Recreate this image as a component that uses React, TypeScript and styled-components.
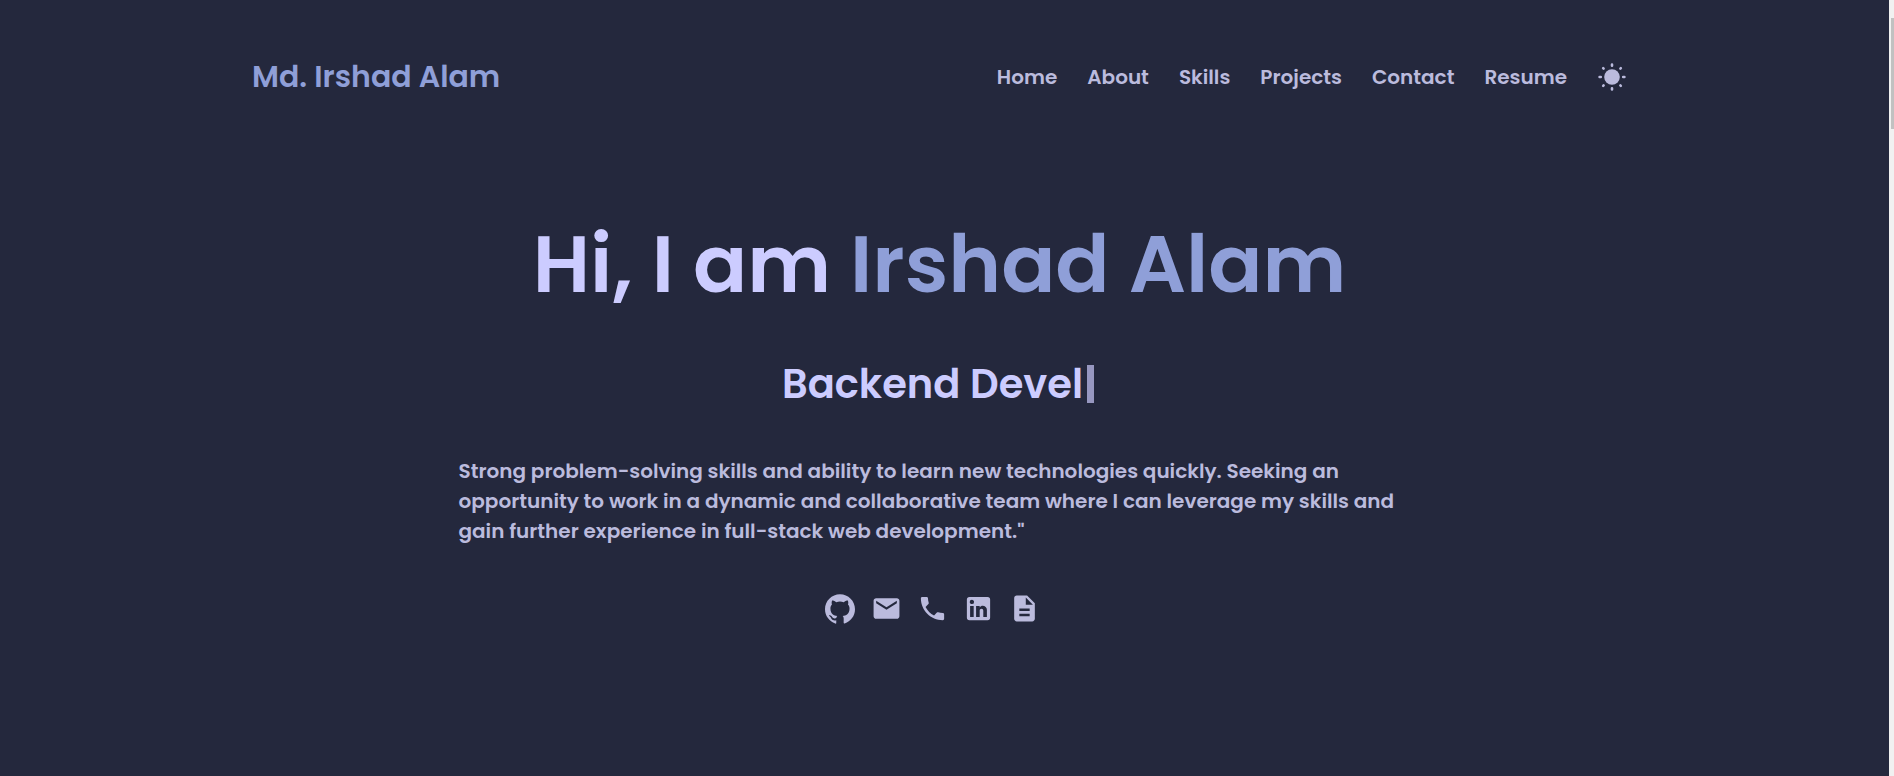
import React from "react";
import styled, { createGlobalStyle } from "styled-components";
import { MdEmail, MdPhone, MdDescription } from "react-icons/md";
import { SiGithub } from "react-icons/si";

const GlobalStyle = createGlobalStyle`
  * { box-sizing: border-box; margin: 0; padding: 0; }
  body { background: #24283d; color: #bbbbdd; font-family: Poppins, Inter, sans-serif; font-weight: 600; }
`;

const Page = styled.div`
  display: grid;
  grid-template-columns: 1fr 5px;
  min-height: 100vh;
`;

const Content = styled.div`
  padding: 0 262px 0 252px;
`;

const ScrollTrack = styled.div`
  background: #f1f1f1;
  padding: 18px 0 0 2px;
`;

const ScrollThumb = styled.div`
  height: 111px;
  background: #c1c1c1;
`;

const Header = styled.header`
  display: flex;
  align-items: center;
  justify-content: space-between;
  padding-top: 53px;
`;

const Brand = styled.a`
  color: #8f9fd8;
  font-size: 30px;
  line-height: 48px;
  text-decoration: none;
`;

const Nav = styled.nav`
  display: flex;
  align-items: center;
  gap: 30px;
`;

const NavLink = styled.a`
  color: inherit;
  font-size: 20px;
  line-height: 30px;
  text-decoration: none;
`;

const ThemeButton = styled.button`
  display: flex;
  border: 0;
  background: none;
  color: inherit;
`;

const Hero = styled.main`
  display: flex;
  flex-direction: column;
  align-items: center;
  padding: 103px 0 80px;
`;

const Title = styled.h1`
  color: #ccccff;
  font-size: 80px;
  line-height: 120px;
  font-weight: 600;
`;

const Accent = styled.span`
  color: #8f9fd8;
`;

const Role = styled.h2`
  display: flex;
  align-items: center;
  gap: 4px;
  margin-top: 30px;
  padding-right: 3px;
  color: #ccccff;
  font-size: 40px;
  line-height: 60px;
  font-weight: 600;
`;

const Cursor = styled.span`
  width: 7px;
  height: 38px;
  background: #9797c0;
`;

const Summary = styled.p`
  width: 100%;
  max-width: 962px;
  margin-top: 42px;
  font-size: 20px;
  line-height: 30px;
`;

const Socials = styled.div`
  display: flex;
  margin-top: 47px;
`;

const SocialLink = styled.a`
  display: flex;
  align-items: center;
  justify-content: center;
  width: 31px;
  height: 31px;
  margin-right: 15px;
  color: inherit;
`;

const navItems = ["Home", "About", "Skills", "Projects", "Contact", "Resume"];

const Sun = () => (
  <svg width="30" height="30" viewBox="0 0 30 30" fill="currentColor" aria-hidden="true">
    <circle cx="15" cy="15" r="7.8" />
    <g stroke="currentColor" strokeWidth="2.6" strokeLinecap="round">
      <path d="M15 2.6v1.2M15 26.2v1.2M2.6 15h1.2M26.2 15h1.2M6.2 6.2l.4.4M23.4 23.4l.4.4M6.2 23.8l.4-.4M23.4 6.6l.4-.4" />
    </g>
  </svg>
);

const LinkedIn = () => (
  <svg width="31" height="31" viewBox="0 0 24 24" fill="currentColor" aria-hidden="true">
    <path d="M19 3a2 2 0 0 1 2 2v14a2 2 0 0 1-2 2H5a2 2 0 0 1-2-2V5a2 2 0 0 1 2-2h14m-.5 15.500v-5.300a3.260 3.260 0 0 0-3.260-3.260c-.85 0-1.840.520-2.320 1.300v-1.110h-2.790v8.370h2.790v-4.930c0-.77.620-1.400 1.390-1.400a1.400 1.400 0 0 1 1.400 1.400v4.930h2.790M6.880 8.560a1.680 1.680 0 0 0 1.680-1.680c0-.93-.75-1.690-1.680-1.690a1.690 1.690 0 0 0-1.690 1.690c0 .93.760 1.680 1.690 1.680m1.390 9.940v-8.370H5.500v8.370h2.770z" />
  </svg>
);

const socials = [
  { label: "GitHub", icon: <SiGithub size={30} /> },
  { label: "Email", icon: <MdEmail size={31} /> },
  { label: "Phone", icon: <MdPhone size={31} /> },
  { label: "LinkedIn", icon: <LinkedIn /> },
  { label: "Resume", icon: <MdDescription size={31} /> },
];

export default function App() {
  return (
    <>
      <GlobalStyle />
      <Page>
        <Content>
          <Header>
            <Brand href="#home">Md. Irshad Alam</Brand>
            <Nav>
              {navItems.map((item) => (
                <NavLink key={item} href={`#${item.toLowerCase()}`}>{item}</NavLink>
              ))}
              <ThemeButton type="button" aria-label="Toggle theme"><Sun /></ThemeButton>
            </Nav>
          </Header>
          <Hero>
            <Title>Hi, I am <Accent>Irshad Alam</Accent></Title>
            <Role>Backend Devel<Cursor /></Role>
            <Summary>
              Strong problem-solving skills and ability to learn new technologies quickly. Seeking an
              opportunity to work in a dynamic and collaborative team where I can leverage my skills and
              gain further experience in full-stack web development."
            </Summary>
            <Socials>
              {socials.map(({ label, icon }) => (
                <SocialLink key={label} href={`#${label.toLowerCase()}`} aria-label={label}>{icon}</SocialLink>
              ))}
            </Socials>
          </Hero>
        </Content>
        <ScrollTrack><ScrollThumb /></ScrollTrack>
      </Page>
    </>
  );
}
